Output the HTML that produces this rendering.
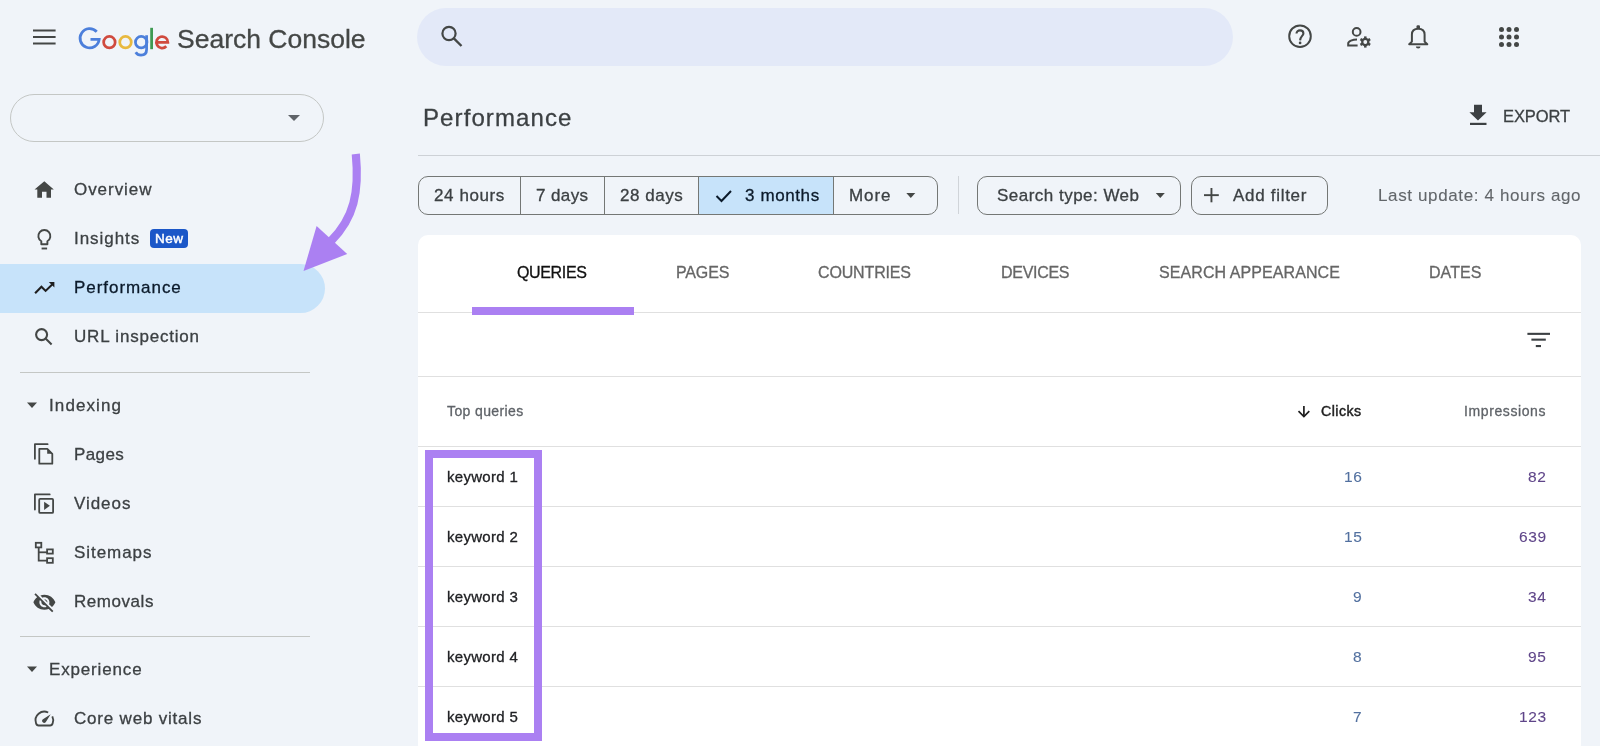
<!DOCTYPE html>
<html><head><meta charset="utf-8"><style>
html,body{margin:0;padding:0;width:1600px;height:746px;overflow:hidden;background:#f0f4f9;font-family:'Liberation Sans', sans-serif}
.t{position:absolute;white-space:nowrap;line-height:1;font-family:'Liberation Sans', sans-serif;will-change:transform;-webkit-text-stroke:0.3px currentColor}
svg{overflow:visible}
</style></head><body>
<svg style="position:absolute;left:0px;top:0px" width="80" height="80" viewBox="0 0 80 80"><g fill="#444746"><rect x="33" y="29.5" width="22.6" height="2"/><rect x="33" y="36" width="22.6" height="2"/><rect x="33" y="42.5" width="22.6" height="2"/></g></svg>
<svg style="position:absolute;left:70px;top:20px" width="110" height="40" viewBox="0 0 110 40"><g transform="translate(-70 -20)" fill="none" stroke-width="2.75"><path d="M96.72 31.75A9.6 9.6 0 1 0 99.2 39.4H90.5" stroke="#4c7fdb"/><circle cx="109.4" cy="42.2" r="5.75" stroke="#d04a3e"/><circle cx="125.5" cy="42.2" r="5.75" stroke="#e8b93f"/><circle cx="141.2" cy="42.2" r="5.75" stroke="#4c7fdb"/><path d="M146.6 35.2V49.6C146.6 53.4 144.2 55.2 141 55.2C138.6 55.2 136.7 54 135.7 52.3" stroke="#4c7fdb"/><line x1="151.6" y1="27.8" x2="151.6" y2="49.2" stroke="#3f9a52"/><path d="M156.5 42.4H167.9A5.75 5.75 0 1 0 166.3 46.3" stroke="#d04a3e"/></g></svg>
<div class="t" style="left:177.00px;top:25.57px;font-size:26.5px;color:#444746;letter-spacing:0px;font-weight:400;">Search Console</div>
<div style="position:absolute;left:417px;top:8px;width:816px;height:58px;background:#e3e9f8;border-radius:29px"></div>
<svg style="position:absolute;left:436px;top:20px" width="32" height="32" viewBox="0 0 32 32"><circle cx="13" cy="13.5" r="6.6" fill="none" stroke="#444746" stroke-width="2.2"/><line x1="17.6" y1="18.2" x2="25.5" y2="26" stroke="#444746" stroke-width="2.4"/></svg>
<svg style="position:absolute;left:1286px;top:22px" width="28" height="28" viewBox="0 0 28 28"><g transform="translate(-1286 -22)"><circle cx="1300" cy="36.2" r="10.8" fill="none" stroke="#444746" stroke-width="1.95"/><path d="M1296.5 33.6C1296.5 31.5 1298 30.4 1300 30.4C1302.1 30.4 1303.4 31.7 1303.4 33.4C1303.4 35.8 1300.3 36.2 1300.1 40.4" fill="none" stroke="#444746" stroke-width="2.1"/><circle cx="1300.1" cy="42.9" r="1.35" fill="#444746"/></g></svg>
<svg style="position:absolute;left:1344px;top:22px" width="30" height="30" viewBox="0 0 30 30"><g transform="translate(-1344 -22)"><circle cx="1356.65" cy="31.9" r="3.85" fill="none" stroke="#444746" stroke-width="2"/><path d="M1357 39.5C1352.6 39.5 1348.2 41.2 1348.2 43.4V45.6H1357.6" fill="none" stroke="#444746" stroke-width="2"/><g transform="translate(1365.3 42)" fill="#444746"><circle r="4.2"/><rect x="-1.25" y="-5.6" width="2.5" height="3" transform="rotate(0)"/><rect x="-1.25" y="-5.6" width="2.5" height="3" transform="rotate(60)"/><rect x="-1.25" y="-5.6" width="2.5" height="3" transform="rotate(120)"/><rect x="-1.25" y="-5.6" width="2.5" height="3" transform="rotate(180)"/><rect x="-1.25" y="-5.6" width="2.5" height="3" transform="rotate(240)"/><rect x="-1.25" y="-5.6" width="2.5" height="3" transform="rotate(300)"/><circle r="1.9" fill="#f0f4f9"/></g></g></svg>
<svg style="position:absolute;left:1404px;top:22px" width="28" height="30" viewBox="0 0 28 30"><g transform="translate(-1404 -22)"><path d="M1409.2 44.3L1411.9 41.6V34.6C1411.9 30.7 1414.6 28.7 1418.25 28.7C1421.9 28.7 1424.6 30.7 1424.6 34.6V41.6L1427.3 44.3Z" fill="none" stroke="#444746" stroke-width="2" stroke-linejoin="round"/><rect x="1416.5" y="25.2" width="3.5" height="3.5" rx="1.2" fill="#444746"/><path d="M1415.9 46.4h4.6a2.3 2.1 0 0 1-4.6 0z" fill="#444746"/></g></svg>
<svg style="position:absolute;left:0px;top:0px" width="1600" height="60" viewBox="0 0 1600 60"><circle cx="1501.5" cy="29.6" r="2.5" fill="#444746"/><circle cx="1501.5" cy="37" r="2.5" fill="#444746"/><circle cx="1501.5" cy="44.4" r="2.5" fill="#444746"/><circle cx="1509" cy="29.6" r="2.5" fill="#444746"/><circle cx="1509" cy="37" r="2.5" fill="#444746"/><circle cx="1509" cy="44.4" r="2.5" fill="#444746"/><circle cx="1516.5" cy="29.6" r="2.5" fill="#444746"/><circle cx="1516.5" cy="37" r="2.5" fill="#444746"/><circle cx="1516.5" cy="44.4" r="2.5" fill="#444746"/></svg>
<div style="position:absolute;left:10px;top:94px;width:312px;height:46px;border:1px solid #c4c7c5;border-radius:24px"></div>
<svg style="position:absolute;left:286px;top:113px" width="16" height="10" viewBox="0 0 16 10"><path d="M2 2h12l-6 6z" fill="#5f6368"/></svg>
<div style="position:absolute;left:0px;top:264px;width:325px;height:49px;background:#c7e3fa;border-radius:0 24.5px 24.5px 0"></div>
<div class="t" style="left:74.00px;top:181.21px;font-size:17px;color:#3c4043;letter-spacing:0.95px;font-weight:400;">Overview</div>
<div class="t" style="left:74.00px;top:230.01px;font-size:17px;color:#3c4043;letter-spacing:0.95px;font-weight:400;">Insights</div>
<div style="position:absolute;left:150px;top:229px;width:38px;height:19px;background:#1b57c8;border-radius:4px"></div>
<div class="t" style="left:155.20px;top:232.17px;font-size:13.5px;color:#fff;letter-spacing:0.5px;font-weight:400;-webkit-text-stroke:0.45px #fff">New</div>
<div class="t" style="left:74.00px;top:279.36px;font-size:17px;color:#0b1a2a;letter-spacing:0.95px;font-weight:400;">Performance</div>
<div class="t" style="left:74.00px;top:328.11px;font-size:17px;color:#3c4043;letter-spacing:0.8px;font-weight:400;">URL inspection</div>
<div style="position:absolute;left:20px;top:372px;width:290px;height:1px;background:#c4c7c5"></div>
<div class="t" style="left:49.00px;top:396.61px;font-size:17px;color:#3c4043;letter-spacing:1.1px;font-weight:400;">Indexing</div>
<div class="t" style="left:74.00px;top:445.61px;font-size:17px;color:#3c4043;letter-spacing:0.4px;font-weight:400;">Pages</div>
<div class="t" style="left:74.00px;top:494.61px;font-size:17px;color:#3c4043;letter-spacing:0.95px;font-weight:400;">Videos</div>
<div class="t" style="left:74.00px;top:543.61px;font-size:17px;color:#3c4043;letter-spacing:0.95px;font-weight:400;">Sitemaps</div>
<div class="t" style="left:74.00px;top:593.01px;font-size:17px;color:#3c4043;letter-spacing:0.55px;font-weight:400;">Removals</div>
<div style="position:absolute;left:20px;top:636px;width:290px;height:1px;background:#c4c7c5"></div>
<div class="t" style="left:49.00px;top:660.81px;font-size:17px;color:#3c4043;letter-spacing:0.84px;font-weight:400;">Experience</div>
<div class="t" style="left:74.00px;top:710.01px;font-size:17px;color:#3c4043;letter-spacing:0.8px;font-weight:400;">Core web vitals</div>
<svg style="position:absolute;left:25px;top:400px" width="14" height="10" viewBox="0 0 14 10"><path d="M2 2.5h10l-5 5.5z" fill="#444746"/></svg>
<svg style="position:absolute;left:25px;top:664px" width="14" height="10" viewBox="0 0 14 10"><path d="M2 2.5h10l-5 5.5z" fill="#444746"/></svg>
<svg style="position:absolute;left:30px;top:176px" width="30" height="26" viewBox="0 0 30 26"><path d="M44.3 181.2L34.5 189.4h2.8V197.8h4.7v-6h4.5v6h4.5v-8.4h2.8z" transform="translate(-30 -176)" fill="#444746"/></svg>
<svg style="position:absolute;left:30px;top:224px" width="30" height="30" viewBox="0 0 30 30"><g transform="translate(-30 -224)" fill="none" stroke="#444746" stroke-width="1.9"><path d="M41.3 241.2A6 6 0 1 1 47.4 241.2V244.3H41.3Z" stroke-linejoin="round"/><line x1="41.6" y1="248.5" x2="47.1" y2="248.5"/></g></svg>
<svg style="position:absolute;left:30px;top:276px" width="30" height="22" viewBox="0 0 30 22"><g transform="translate(-30 -276)"><polyline points="35.1,293.3 41.45,286.8 45.6,290.9 52.2,284.6" fill="none" stroke="#1f1f1f" stroke-width="2.1"/><path d="M48.8 281.9H54.4V287.5z" fill="#1f1f1f"/></g></svg>
<svg style="position:absolute;left:30px;top:322px" width="30" height="28" viewBox="0 0 30 28"><g transform="translate(-30 -322)" fill="none" stroke="#444746" stroke-width="2.1"><circle cx="41.6" cy="334.6" r="5.5"/><line x1="45.6" y1="338.6" x2="51.6" y2="344.6"/></g></svg>
<svg style="position:absolute;left:30px;top:440px" width="30" height="30" viewBox="0 0 30 30"><g transform="translate(-30 -440)"><g fill="none" stroke="#444746" stroke-width="1.8" stroke-linejoin="round" stroke-linecap="round"><polyline points="34.9,458.8 34.9,444.2 47.6,444.2"/><path d="M39.3 448.9h8l5 5v9.8h-13z"/></g><path d="M47.2 448.5v5.3h5.3z" fill="#444746"/></g></svg>
<svg style="position:absolute;left:30px;top:490px" width="30" height="30" viewBox="0 0 30 30"><g transform="translate(-30 -490)"><g fill="none" stroke="#444746" stroke-width="1.8" stroke-linejoin="round" stroke-linecap="round"><polyline points="34.9,509.5 34.9,494.4 49.7,494.4"/><rect x="39.2" y="498.9" width="13.9" height="14" rx="1"/></g><path d="M44.1 501.8v8.1l5.8-4.05z" fill="#444746"/></g></svg>
<svg style="position:absolute;left:30px;top:538px" width="30" height="30" viewBox="0 0 30 30"><g transform="translate(-30 -538)" fill="none" stroke="#444746" stroke-width="1.8"><rect x="35.8" y="542.8" width="5.5" height="4.6"/><rect x="47.1" y="549.4" width="5.7" height="4.2"/><rect x="47.1" y="558.2" width="5.7" height="4.6"/><polyline points="38.7,547.4 38.7,560.7 47.1,560.7"/><line x1="38.7" y1="552.3" x2="47.1" y2="552.3"/></g></svg>
<svg style="position:absolute;left:30px;top:588px" width="30" height="28" viewBox="0 0 30 28"><path transform="translate(2.4 2.3)" fill="#444746" d="M12 7c2.76 0 5 2.24 5 5 0 .65-.13 1.26-.36 1.83l2.92 2.92c1.51-1.26 2.7-2.89 3.43-4.75-1.730-4.39-6-7.5-11-7.5-1.4 0-2.74.25-3.98.7l2.16 2.16C10.74 7.130 11.35 7 12 7zM2 4.27l2.28 2.28.46.46C3.08 8.3 1.78 10.02 1 12c1.73 4.39 6 7.5 11 7.5 1.55 0 3.03-.3 4.38-.84l.42.42L19.73 22 21 20.73 3.27 3 2 4.27zM7.53 9.8l1.55 1.55c-.05.21-.08.43-.08.65 0 1.66 1.34 3 3 3 .22 0 .44-.03.65-.08l1.55 1.550c-.67.33-1.41.53-2.2.53-2.76 0-5-2.24-5-5 0-.79.2-1.53.53-2.2zm4.31-.78l3.15 3.15.02-.16c0-1.66-1.34-3-3-3l-.17.01z"/></svg>
<svg style="position:absolute;left:30px;top:706px" width="30" height="26" viewBox="0 0 30 26"><g transform="translate(-30 -706)"><path d="M48.2 712.5A8.75 8.75 0 0 0 35.97 723Q36.6 725.5 38.6 725.5H50.1Q52.1 725.5 52.74 723A8.75 8.75 0 0 0 52.3 716.3" fill="none" stroke="#444746" stroke-width="1.85"/><path d="M50.7 714.2L45.7 722.2A2.05 2.05 0 1 1 42.6 719.4z" fill="#444746"/></g></svg>
<svg style="position:absolute;left:290px;top:150px" width="80" height="130" viewBox="0 0 80 130"><g transform="translate(-290 -150)"><path d="M355.8 154 C359.5 192 354 218 331 241" fill="none" stroke="#ab80f2" stroke-width="8.2"/><path d="M316.6 226 L347.2 254 L303.5 271z" fill="#ab80f2"/></g></svg>
<div class="t" style="left:423.00px;top:106.18px;font-size:24px;color:#3c4043;letter-spacing:1.1px;font-weight:400;">Performance</div>
<svg style="position:absolute;left:1462px;top:100px" width="30" height="30" viewBox="0 0 30 30"><g transform="translate(-1462 -100)" fill="#3c4043"><path d="M1474 104.8h8v7.4h4.6l-8.6 8.4-8.6-8.4h4.6z"/><rect x="1470" y="122.8" width="16.5" height="2.2"/></g></svg>
<div class="t" style="left:1502.80px;top:107.93px;font-size:16.5px;color:#3c4043;letter-spacing:-0.1px;font-weight:400;">EXPORT</div>
<div style="position:absolute;left:418px;top:155px;width:1182px;height:1.2px;background:#cdd1d6"></div>
<div style="position:absolute;left:418px;top:176px;width:520px;height:39px;border:1px solid #747775;border-radius:10px;box-sizing:border-box;overflow:hidden"></div>
<div style="position:absolute;left:698.5px;top:177px;width:135px;height:37px;background:#c7e3fa"></div>
<div style="position:absolute;left:520px;top:176px;width:1.2px;height:39px;background:#747775"></div>
<div style="position:absolute;left:604px;top:176px;width:1.2px;height:39px;background:#747775"></div>
<div style="position:absolute;left:698px;top:176px;width:1.2px;height:39px;background:#747775"></div>
<div style="position:absolute;left:833px;top:176px;width:1.2px;height:39px;background:#747775"></div>
<div class="t" style="left:433.50px;top:186.86px;font-size:17px;color:#3c4043;letter-spacing:0.6px;font-weight:400;">24 hours</div>
<div class="t" style="left:536.00px;top:186.86px;font-size:17px;color:#3c4043;letter-spacing:0.4px;font-weight:400;">7 days</div>
<div class="t" style="left:619.50px;top:186.86px;font-size:17px;color:#3c4043;letter-spacing:0.55px;font-weight:400;">28 days</div>
<svg style="position:absolute;left:710px;top:184px" width="26" height="22" viewBox="0 0 26 22"><polyline points="716.5,196 721.5,201 731,191" transform="translate(-710 -184)" fill="none" stroke="#0b1a2a" stroke-width="2"/></svg>
<div class="t" style="left:744.50px;top:186.86px;font-size:17px;color:#0b1a2a;letter-spacing:0.6px;font-weight:400;">3 months</div>
<div class="t" style="left:849.00px;top:186.86px;font-size:17px;color:#3c4043;letter-spacing:0.9px;font-weight:400;">More</div>
<svg style="position:absolute;left:900px;top:188px" width="22" height="16" viewBox="0 0 22 16"><path d="M906.3 193h9l-4.5 5z" transform="translate(-900 -188)" fill="#444746"/></svg>
<div style="position:absolute;left:958px;top:176px;width:1px;height:38px;background:#d0d4d9"></div>
<div style="position:absolute;left:977px;top:176px;width:203.5px;height:39px;border:1px solid #747775;border-radius:10px;box-sizing:border-box"></div>
<div class="t" style="left:997.00px;top:186.86px;font-size:17px;color:#3c4043;letter-spacing:0.48px;font-weight:400;">Search type: Web</div>
<svg style="position:absolute;left:1150px;top:188px" width="22" height="16" viewBox="0 0 22 16"><path d="M1155.8 193h9l-4.5 5z" transform="translate(-1150 -188)" fill="#444746"/></svg>
<div style="position:absolute;left:1191px;top:176px;width:136.5px;height:39px;border:1px solid #747775;border-radius:10px;box-sizing:border-box"></div>
<svg style="position:absolute;left:1200px;top:184px" width="24" height="22" viewBox="0 0 24 22"><g transform="translate(-1200 -184)" fill="#444746"><rect x="1204" y="194.2" width="14.8" height="1.9"/><rect x="1210.5" y="188" width="1.9" height="14.3"/></g></svg>
<div class="t" style="left:1232.50px;top:186.86px;font-size:17px;color:#3c4043;letter-spacing:0.7px;font-weight:400;">Add filter</div>
<div class="t" style="left:1377.50px;top:187.21px;font-size:17px;color:#62666a;letter-spacing:0.63px;font-weight:400;-webkit-text-stroke:0.1px #62666a">Last update: 4 hours ago</div>
<div style="position:absolute;left:418px;top:235px;width:1163px;height:520px;background:#fff;border-radius:10px"></div>
<div class="t" style="left:516.50px;top:264.56px;font-size:16px;color:#111;letter-spacing:-0.35px;font-weight:400;">QUERIES</div>
<div class="t" style="left:675.50px;top:264.56px;font-size:16px;color:#666666;letter-spacing:-0.15px;font-weight:400;">PAGES</div>
<div class="t" style="left:817.80px;top:264.56px;font-size:16px;color:#666666;letter-spacing:-0.15px;font-weight:400;">COUNTRIES</div>
<div class="t" style="left:1000.60px;top:264.56px;font-size:16px;color:#666666;letter-spacing:-0.3px;font-weight:400;">DEVICES</div>
<div class="t" style="left:1158.80px;top:264.56px;font-size:16px;color:#666666;letter-spacing:0.08px;font-weight:400;">SEARCH APPEARANCE</div>
<div class="t" style="left:1429.30px;top:264.56px;font-size:16px;color:#666666;letter-spacing:0.07px;font-weight:400;">DATES</div>
<div style="position:absolute;left:418px;top:312px;width:1163px;height:1px;background:#e0e0e0"></div>
<div style="position:absolute;left:472px;top:307px;width:161.5px;height:8px;background:#ab80f2"></div>
<svg style="position:absolute;left:1520px;top:326px" width="36" height="28" viewBox="0 0 36 28"><g transform="translate(-1520 -326)" fill="#3c4043"><rect x="1527.4" y="332.8" width="22.6" height="2.1"/><rect x="1531.4" y="338.6" width="14.4" height="2.1"/><rect x="1535.8" y="345" width="5.2" height="2.1"/></g></svg>
<div style="position:absolute;left:418px;top:376px;width:1163px;height:1px;background:#e0e0e0"></div>
<div class="t" style="left:447.30px;top:404.40px;font-size:14px;color:#5f6368;letter-spacing:0.39px;font-weight:400;">Top queries</div>
<svg style="position:absolute;left:1290px;top:400px" width="24" height="22" viewBox="0 0 24 22"><g transform="translate(-1290 -400)" fill="none" stroke="#1f1f1f" stroke-width="1.7"><line x1="1303.9" y1="406" x2="1303.9" y2="416.5"/><polyline points="1298.5,411.2 1303.9,416.6 1309.3,411.2"/></g></svg>
<div class="t" style="left:1320.80px;top:403.88px;font-size:14.2px;color:#1f1f1f;letter-spacing:0.45px;font-weight:400;-webkit-text-stroke:0.45px #1f1f1f">Clicks</div>
<div class="t" style="right:54.00px;top:404.15px;font-size:14px;color:#5f6368;letter-spacing:0.6px;font-weight:400;">Impressions</div>
<div style="position:absolute;left:418px;top:446px;width:1163px;height:1px;background:#e0e0e0"></div>
<div class="t" style="left:447.30px;top:469.20px;font-size:15px;color:#202124;letter-spacing:0.3px;font-weight:400;">keyword 1</div>
<div class="t" style="right:238.00px;top:468.78px;font-size:15.5px;color:#52709f;letter-spacing:0.6px;font-weight:400;-webkit-text-stroke:0.1px #52709f">16</div>
<div class="t" style="right:53.50px;top:468.78px;font-size:15.5px;color:#5f4589;letter-spacing:0.6px;font-weight:400;-webkit-text-stroke:0.1px #5f4589">82</div>
<div style="position:absolute;left:418px;top:506px;width:1163px;height:1px;background:#e0e0e0"></div>
<div class="t" style="left:447.30px;top:529.20px;font-size:15px;color:#202124;letter-spacing:0.3px;font-weight:400;">keyword 2</div>
<div class="t" style="right:238.00px;top:528.78px;font-size:15.5px;color:#52709f;letter-spacing:0.6px;font-weight:400;-webkit-text-stroke:0.1px #52709f">15</div>
<div class="t" style="right:53.50px;top:528.78px;font-size:15.5px;color:#5f4589;letter-spacing:0.6px;font-weight:400;-webkit-text-stroke:0.1px #5f4589">639</div>
<div style="position:absolute;left:418px;top:566px;width:1163px;height:1px;background:#e0e0e0"></div>
<div class="t" style="left:447.30px;top:589.20px;font-size:15px;color:#202124;letter-spacing:0.3px;font-weight:400;">keyword 3</div>
<div class="t" style="right:238.00px;top:588.78px;font-size:15.5px;color:#52709f;letter-spacing:0.6px;font-weight:400;-webkit-text-stroke:0.1px #52709f">9</div>
<div class="t" style="right:53.50px;top:588.78px;font-size:15.5px;color:#5f4589;letter-spacing:0.6px;font-weight:400;-webkit-text-stroke:0.1px #5f4589">34</div>
<div style="position:absolute;left:418px;top:626px;width:1163px;height:1px;background:#e0e0e0"></div>
<div class="t" style="left:447.30px;top:649.20px;font-size:15px;color:#202124;letter-spacing:0.3px;font-weight:400;">keyword 4</div>
<div class="t" style="right:238.00px;top:648.78px;font-size:15.5px;color:#52709f;letter-spacing:0.6px;font-weight:400;-webkit-text-stroke:0.1px #52709f">8</div>
<div class="t" style="right:53.50px;top:648.78px;font-size:15.5px;color:#5f4589;letter-spacing:0.6px;font-weight:400;-webkit-text-stroke:0.1px #5f4589">95</div>
<div style="position:absolute;left:418px;top:686px;width:1163px;height:1px;background:#e0e0e0"></div>
<div class="t" style="left:447.30px;top:709.20px;font-size:15px;color:#202124;letter-spacing:0.3px;font-weight:400;">keyword 5</div>
<div class="t" style="right:238.00px;top:708.78px;font-size:15.5px;color:#52709f;letter-spacing:0.6px;font-weight:400;-webkit-text-stroke:0.1px #52709f">7</div>
<div class="t" style="right:53.50px;top:708.78px;font-size:15.5px;color:#5f4589;letter-spacing:0.6px;font-weight:400;-webkit-text-stroke:0.1px #5f4589">123</div>
<div style="position:absolute;left:425px;top:449.5px;width:117px;height:291px;border:8px solid #ab80f2;box-sizing:border-box"></div>
</body></html>
